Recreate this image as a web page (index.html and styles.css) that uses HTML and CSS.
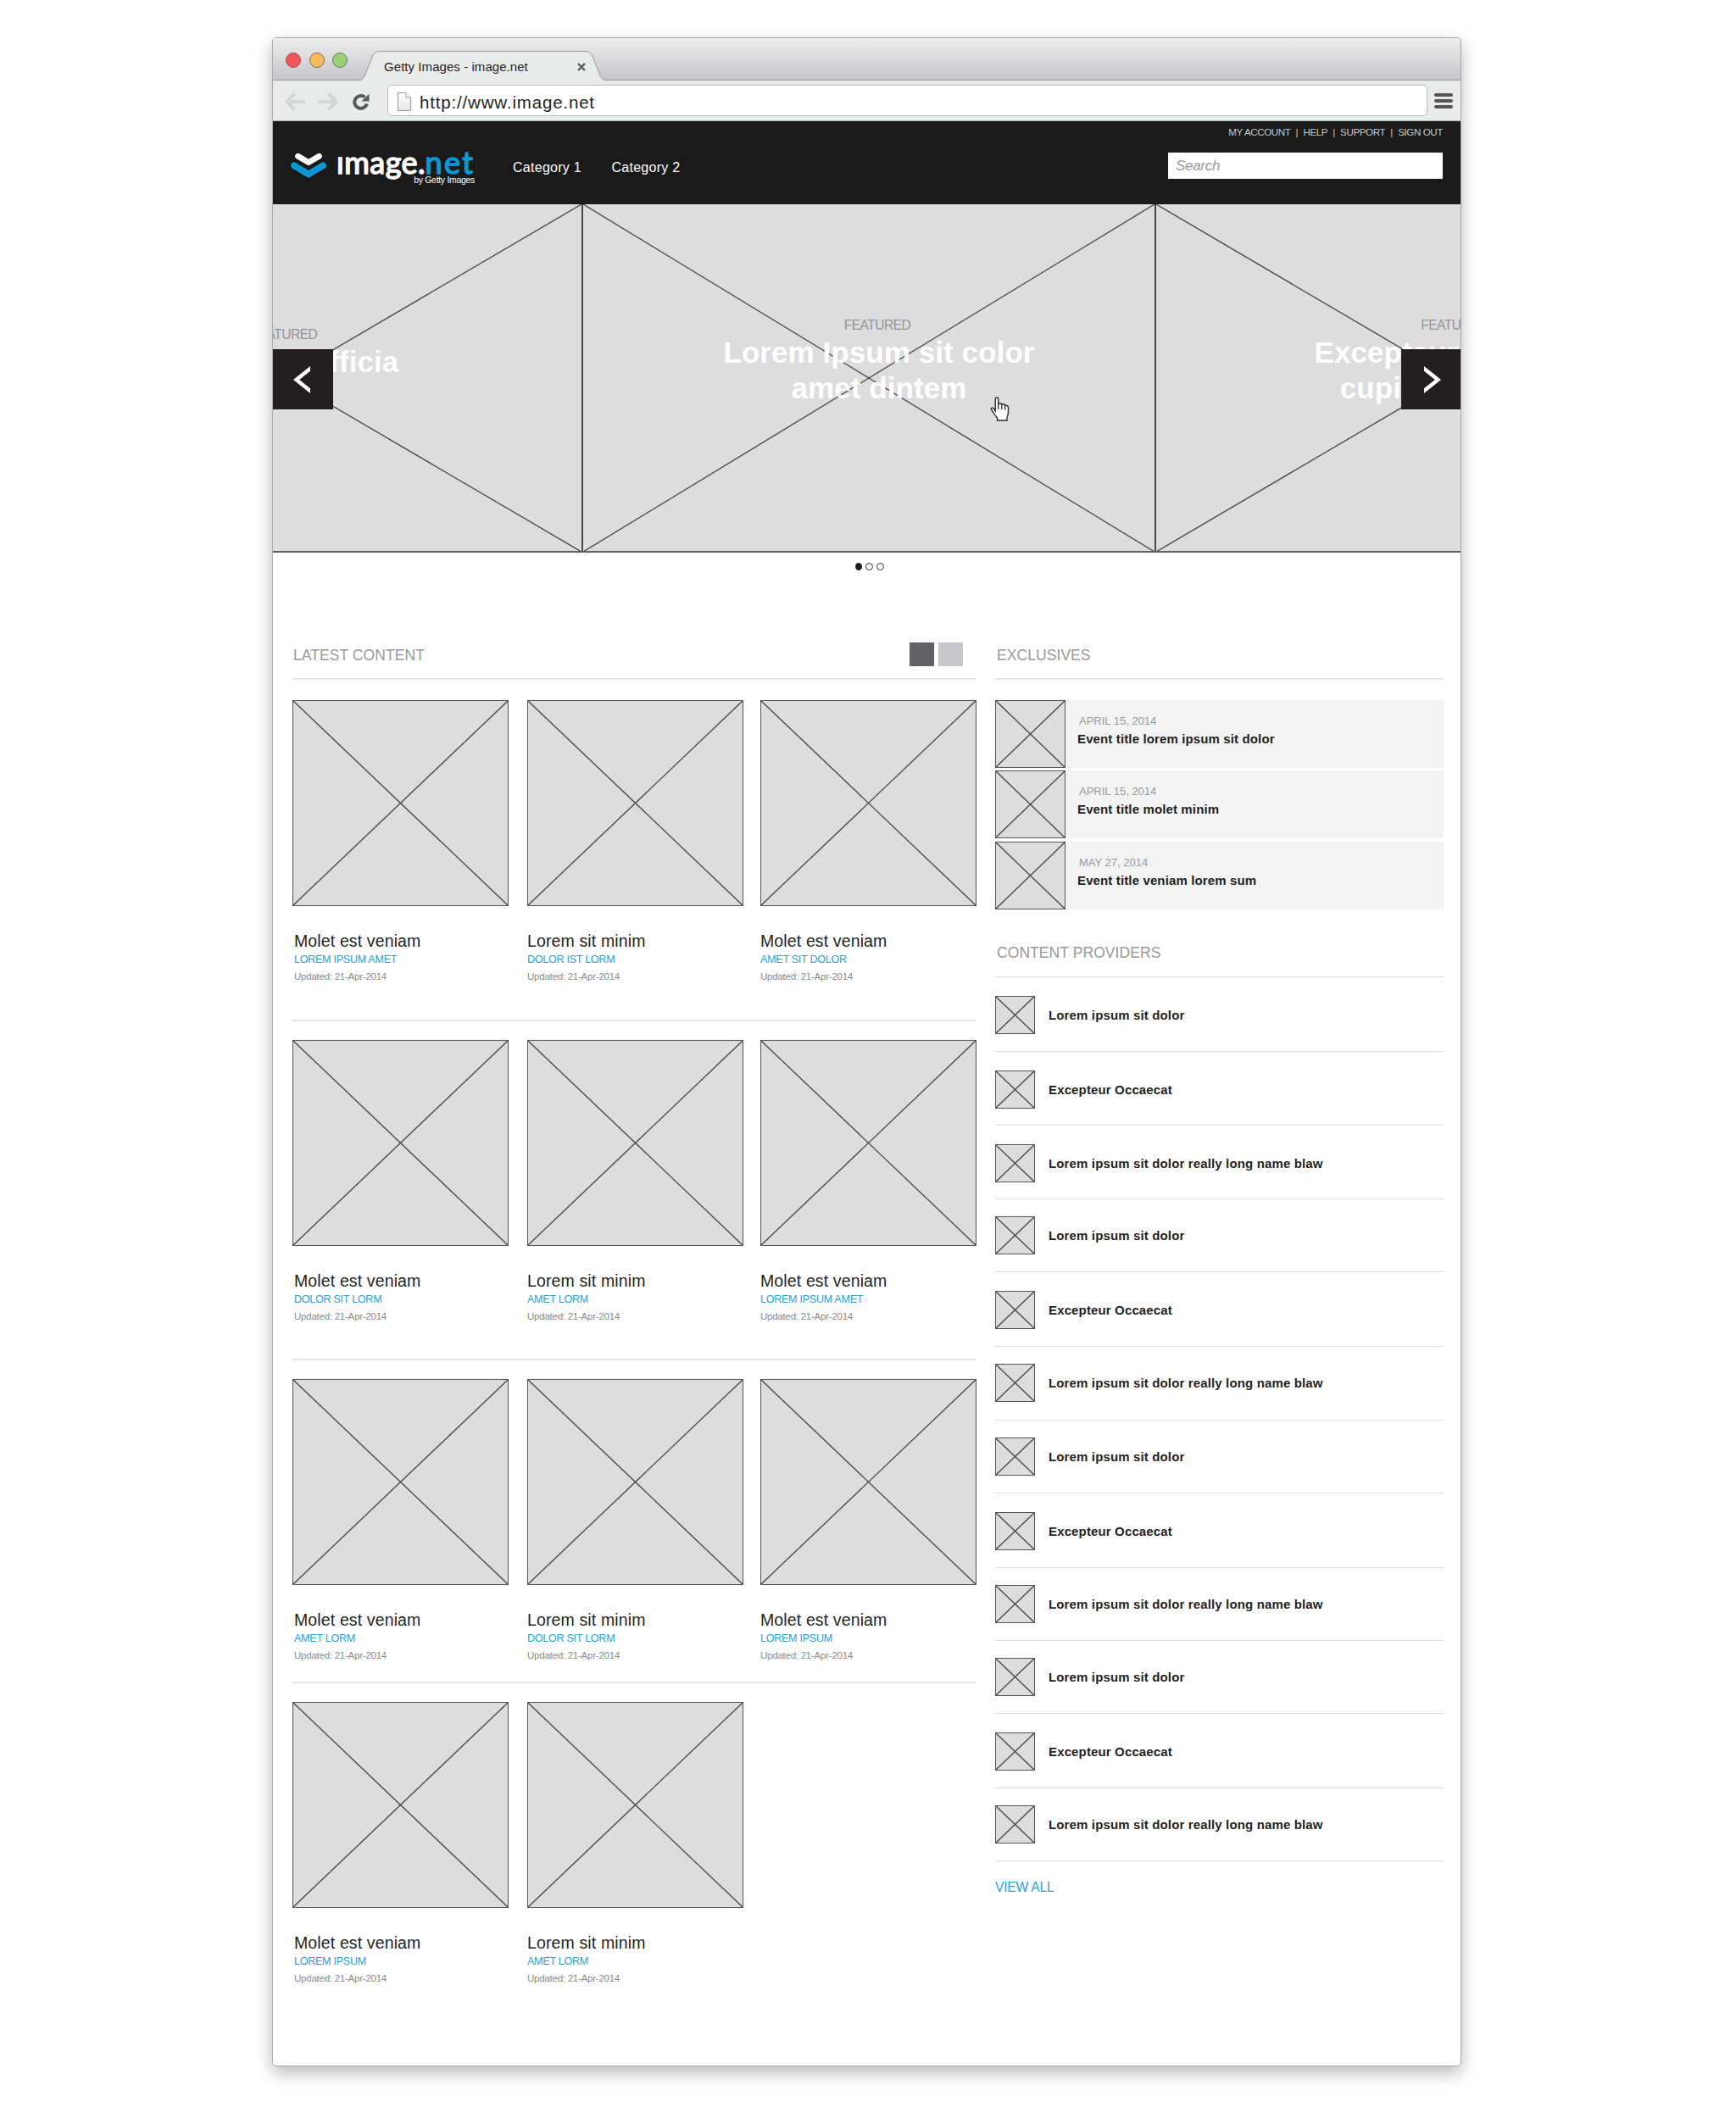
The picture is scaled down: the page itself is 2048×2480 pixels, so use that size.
FILE: index.html
```html
<!DOCTYPE html>
<html lang="en">
<head>
<meta charset="utf-8">
<title>Getty Images - image.net</title>
<link rel="stylesheet" href="styles.css">
</head>
<body>
<div class="window">
  <div class="tabstrip">
    <div class="lights"><i class="red"></i><i class="amber"></i><i class="green"></i></div>
    <div class="tab">
      <svg class="tab-shape" width="290" height="35" viewBox="0 0 290 35"><path d="M0 34.500C4 34.500 5.500 31 7 28L15.500 6Q18 .6 24 .6H266Q272.500 .6 275 6L283.500 28Q286 34.500 290 34.500V36H0Z" fill="#e9ebeb" stroke="#97979b"/></svg>
      <span class="tab-title">Getty Images - image.net</span>
      <svg class="tab-close" width="10" height="10" viewBox="0 0 10 10"><path d="M1 1L9 9M9 1L1 9" stroke="#58595b" stroke-width="2.400"/></svg>
    </div>
  </div>
  <div class="toolbar">
    <svg class="nav-arrow" width="25" height="22" viewBox="0 0 25 22"><path d="M11.500 1.500L2.500 11L11.500 20.500M2.500 11H24" fill="none" stroke="#d3d5d6" stroke-width="4"/></svg>
    <svg class="nav-arrow" width="25" height="22" viewBox="0 0 25 22"><path d="M13.500 1.500L22.500 11L13.500 20.500M22.500 11H1" fill="none" stroke="#d3d5d6" stroke-width="4"/></svg>
    <svg class="reload" width="20" height="20" viewBox="0 0 20 20"><path d="M16.800 12.500A7.400 7.400 0 1 1 14.500 4.800" fill="none" stroke="#58595b" stroke-width="4"/><path d="M19.500 .8V9.500H10.500Z" fill="#58595b"/></svg>
    <div class="address">
      <svg width="16" height="22" viewBox="0 0 16 22"><defs><linearGradient id="sheet" x2="0" y2="1"><stop stop-color="#fff"/><stop offset="1" stop-color="#e6e6e6"/></linearGradient></defs><path d="M.5 .5H10L15.500 6V21.500H.5Z" fill="url(#sheet)" stroke="#999"/><path d="M10 .5V6H15.500" fill="#fff" stroke="#999"/></svg>
      <span class="url">http://www.image.net</span>
    </div>
    <div class="menu"><i></i><i></i><i></i></div>
  </div>

  <header class="site-header">
    <a class="logo">
      <svg width="42" height="32" viewBox="0 0 42 32"><path d="M4 15.300L21 25.500L38 15.300" fill="none" stroke="#0d96d4" stroke-width="7.800" stroke-linecap="round"/><path d="M8.500 5L21 13L33.500 5" fill="none" stroke="#1a1a1a" stroke-width="9" stroke-linecap="round"/><path d="M8.500 4.300L21 11.600L33.500 4.300" fill="none" stroke="#fff" stroke-width="6.800" stroke-linecap="round"/></svg>
      <span class="wordmark"><span class="brand"><span class="brand-name">image</span><span class="brand-dot">.</span><span class="brand-net">net</span></span><span class="byline">by Getty Images</span></span>
    </a>
    <nav class="categories"><a>Category 1</a><a>Category 2</a></nav>
    <div class="account">
      <div class="links"><a>MY ACCOUNT</a><b>|</b><a>HELP</a><b>|</b><a>SUPPORT</a><b>|</b><a>SIGN OUT</a></div>
      <div class="search">Search</div>
    </div>
  </header>

  <section class="hero">
    <div class="track">
      <article class="slide prev">
        <svg class="cross"><line x1="0" y1="0" x2="100%" y2="100%"/><line x1="100%" y1="0" x2="0" y2="100%"/></svg>
        <div class="caption"><p>FEATURED</p><h2>deserunt officia</h2></div>
      </article>
      <article class="slide current">
        <svg class="cross"><line x1="0" y1="0" x2="100%" y2="100%"/><line x1="100%" y1="0" x2="0" y2="100%"/></svg>
        <div class="caption"><p>FEATURED</p><h2>Lorem Ipsum sit color<br>amet dintem</h2></div>
      </article>
      <article class="slide next">
        <svg class="cross"><line x1="0" y1="0" x2="100%" y2="100%"/><line x1="100%" y1="0" x2="0" y2="100%"/></svg>
        <div class="caption"><p>FEATURED</p><h2>Excepteur occaecat<br>cupidatat minim</h2></div>
      </article>
    </div>
    <button class="arrow left"><svg width="20" height="32" viewBox="0 0 20 32"><path d="M22 1.300L3.600 16L22 30.700" fill="none" stroke="#fff" stroke-width="4.500"/></svg></button>
    <button class="arrow right"><svg width="20" height="32" viewBox="0 0 20 32"><path d="M-2 1.300L16.400 16L-2 30.700" fill="none" stroke="#fff" stroke-width="4.500"/></svg></button>
    <svg class="pointer" width="24" height="30" viewBox="0 0 24 30"><path d="M6.300 17V3Q6.300 1 8 1Q9.700 1 9.700 3V9Q10.500 7.400 12.200 7.900Q13.600 8.300 13.700 9.500Q15 8.300 16.500 9Q17.600 9.500 17.700 10.800Q19 9.800 20.300 10.600Q21.600 11.500 21.500 13.500V19Q21.300 22 20 24.500V28H8.500V25Q5 21 3 17.500Q.5 14.500 1.500 13.500Q3 12.500 4.500 14.200Z" fill="#fff" stroke="#2b2b2b" stroke-width="1.400"/><path d="M9.700 8V15M13.700 9.500V15M17.700 10.800V15.500" stroke="#2b2b2b" stroke-width="1.300"/></svg>
  </section>
  <div class="pager"><i class="on"></i><i></i><i></i></div>

  <main class="content">
    <section class="latest">
      <div class="head"><h3>LATEST CONTENT</h3><div class="toggles"><i class="dark"></i><i></i></div></div>
      <div class="row">
        <article class="card"><svg class="cross"><line x1="0" y1="0" x2="100%" y2="100%"/><line x1="100%" y1="0" x2="0" y2="100%"/></svg><h4>Molet est veniam</h4><p class="tag">LOREM IPSUM AMET</p><p class="date">Updated: 21-Apr-2014</p></article>
        <article class="card"><svg class="cross"><line x1="0" y1="0" x2="100%" y2="100%"/><line x1="100%" y1="0" x2="0" y2="100%"/></svg><h4>Lorem sit minim</h4><p class="tag">DOLOR IST LORM</p><p class="date">Updated: 21-Apr-2014</p></article>
        <article class="card"><svg class="cross"><line x1="0" y1="0" x2="100%" y2="100%"/><line x1="100%" y1="0" x2="0" y2="100%"/></svg><h4>Molet est veniam</h4><p class="tag">AMET SIT DOLOR</p><p class="date">Updated: 21-Apr-2014</p></article>
      </div>
      <div class="row">
        <article class="card"><svg class="cross"><line x1="0" y1="0" x2="100%" y2="100%"/><line x1="100%" y1="0" x2="0" y2="100%"/></svg><h4>Molet est veniam</h4><p class="tag">DOLOR SIT LORM</p><p class="date">Updated: 21-Apr-2014</p></article>
        <article class="card"><svg class="cross"><line x1="0" y1="0" x2="100%" y2="100%"/><line x1="100%" y1="0" x2="0" y2="100%"/></svg><h4>Lorem sit minim</h4><p class="tag">AMET LORM</p><p class="date">Updated: 21-Apr-2014</p></article>
        <article class="card"><svg class="cross"><line x1="0" y1="0" x2="100%" y2="100%"/><line x1="100%" y1="0" x2="0" y2="100%"/></svg><h4>Molet est veniam</h4><p class="tag">LOREM IPSUM AMET</p><p class="date">Updated: 21-Apr-2014</p></article>
      </div>
      <div class="row short">
        <article class="card"><svg class="cross"><line x1="0" y1="0" x2="100%" y2="100%"/><line x1="100%" y1="0" x2="0" y2="100%"/></svg><h4>Molet est veniam</h4><p class="tag">AMET LORM</p><p class="date">Updated: 21-Apr-2014</p></article>
        <article class="card"><svg class="cross"><line x1="0" y1="0" x2="100%" y2="100%"/><line x1="100%" y1="0" x2="0" y2="100%"/></svg><h4>Lorem sit minim</h4><p class="tag">DOLOR SIT LORM</p><p class="date">Updated: 21-Apr-2014</p></article>
        <article class="card"><svg class="cross"><line x1="0" y1="0" x2="100%" y2="100%"/><line x1="100%" y1="0" x2="0" y2="100%"/></svg><h4>Molet est veniam</h4><p class="tag">LOREM IPSUM</p><p class="date">Updated: 21-Apr-2014</p></article>
      </div>
      <div class="row last">
        <article class="card"><svg class="cross"><line x1="0" y1="0" x2="100%" y2="100%"/><line x1="100%" y1="0" x2="0" y2="100%"/></svg><h4>Molet est veniam</h4><p class="tag">LOREM IPSUM</p><p class="date">Updated: 21-Apr-2014</p></article>
        <article class="card"><svg class="cross"><line x1="0" y1="0" x2="100%" y2="100%"/><line x1="100%" y1="0" x2="0" y2="100%"/></svg><h4>Lorem sit minim</h4><p class="tag">AMET LORM</p><p class="date">Updated: 21-Apr-2014</p></article>
      </div>
    </section>

    <aside class="side">
      <div class="head"><h3>EXCLUSIVES</h3></div>
      <ul class="events">
        <li><svg class="cross"><line x1="0" y1="0" x2="100%" y2="100%"/><line x1="100%" y1="0" x2="0" y2="100%"/></svg><div><p>APRIL 15, 2014</p><h4>Event title lorem ipsum sit dolor</h4></div></li>
        <li><svg class="cross"><line x1="0" y1="0" x2="100%" y2="100%"/><line x1="100%" y1="0" x2="0" y2="100%"/></svg><div><p>APRIL 15, 2014</p><h4>Event title molet minim</h4></div></li>
        <li><svg class="cross"><line x1="0" y1="0" x2="100%" y2="100%"/><line x1="100%" y1="0" x2="0" y2="100%"/></svg><div><p>MAY 27, 2014</p><h4>Event title veniam lorem sum</h4></div></li>
      </ul>
      <div class="head providers-head"><h3>CONTENT PROVIDERS</h3></div>
      <ul class="providers">
        <li><svg class="cross"><line x1="0" y1="0" x2="100%" y2="100%"/><line x1="100%" y1="0" x2="0" y2="100%"/></svg><span>Lorem ipsum sit dolor</span></li>
        <li><svg class="cross"><line x1="0" y1="0" x2="100%" y2="100%"/><line x1="100%" y1="0" x2="0" y2="100%"/></svg><span>Excepteur Occaecat</span></li>
        <li><svg class="cross"><line x1="0" y1="0" x2="100%" y2="100%"/><line x1="100%" y1="0" x2="0" y2="100%"/></svg><span>Lorem ipsum sit dolor really long name blaw</span></li>
        <li><svg class="cross"><line x1="0" y1="0" x2="100%" y2="100%"/><line x1="100%" y1="0" x2="0" y2="100%"/></svg><span>Lorem ipsum sit dolor</span></li>
        <li><svg class="cross"><line x1="0" y1="0" x2="100%" y2="100%"/><line x1="100%" y1="0" x2="0" y2="100%"/></svg><span>Excepteur Occaecat</span></li>
        <li><svg class="cross"><line x1="0" y1="0" x2="100%" y2="100%"/><line x1="100%" y1="0" x2="0" y2="100%"/></svg><span>Lorem ipsum sit dolor really long name blaw</span></li>
        <li><svg class="cross"><line x1="0" y1="0" x2="100%" y2="100%"/><line x1="100%" y1="0" x2="0" y2="100%"/></svg><span>Lorem ipsum sit dolor</span></li>
        <li><svg class="cross"><line x1="0" y1="0" x2="100%" y2="100%"/><line x1="100%" y1="0" x2="0" y2="100%"/></svg><span>Excepteur Occaecat</span></li>
        <li><svg class="cross"><line x1="0" y1="0" x2="100%" y2="100%"/><line x1="100%" y1="0" x2="0" y2="100%"/></svg><span>Lorem ipsum sit dolor really long name blaw</span></li>
        <li><svg class="cross"><line x1="0" y1="0" x2="100%" y2="100%"/><line x1="100%" y1="0" x2="0" y2="100%"/></svg><span>Lorem ipsum sit dolor</span></li>
        <li><svg class="cross"><line x1="0" y1="0" x2="100%" y2="100%"/><line x1="100%" y1="0" x2="0" y2="100%"/></svg><span>Excepteur Occaecat</span></li>
        <li><svg class="cross"><line x1="0" y1="0" x2="100%" y2="100%"/><line x1="100%" y1="0" x2="0" y2="100%"/></svg><span>Lorem ipsum sit dolor really long name blaw</span></li>
      </ul>
      <a class="view-all">VIEW ALL</a>
    </aside>
  </main>
</div>
</body>
</html>
```
FILE: styles.css
```css
* { box-sizing: border-box; }
html { background: #fff; }
body { display: flow-root; min-height: 2480px; margin: 0; background: #fff; font-family: "Liberation Sans", Arial, sans-serif; color: #1f1f1f; }
h2, h3, h4, p, ul { margin: 0; padding: 0; font-weight: normal; }
ul { list-style: none; }
svg { display: block; }

.window { width: 1403px; height: 2394px; margin: 44px 0 0 321px; border: 1px solid #a9a9ac; border-radius: 5px; background: #fff; box-shadow: 0 8px 20px rgba(0, 0, 0, .28); overflow: hidden; }

/* Browser chrome */
.tabstrip { display: flex; height: 50px; border-bottom: 1px solid #97979b; background: linear-gradient(#ededee, #c6c6ca); }
.lights { display: flex; gap: 9.500px; width: 102px; padding: 17px 0 0 15px; }
.lights i { width: 18px; height: 18px; border: 1px solid #7d6a5a; border-radius: 50%; }
.lights .red { background: #f1565a; border-color: #a24a4d; }
.lights .amber { background: #f9bb5b; }
.lights .green { background: #99d077; border-color: #62804f; }
.tab { display: grid; grid-template-columns: 290px; height: 35px; margin-top: 15px; }
.tab > * { grid-area: 1 / 1; }
.tab-title { justify-self: start; margin: 8px 0 0 29px; font-size: 15px; letter-spacing: .06px; line-height: 22px; white-space: nowrap; }
.tab-close { margin: 14px 0 0 257px; }
.toolbar { display: flex; height: 48px; padding: 5px 9px 0 14px; border-bottom: 1px solid #b5b8b8; background: #e9ebeb; }
.nav-arrow { margin: 9px 13px 0 0; }
.reload { margin: 10px 21px 0 4px; }
.address { display: flex; flex: 1; height: 37px; padding: 8px 11px; gap: 10px; border: 1px solid #bbbebe; border-radius: 5px; background: #fff; }
.url { font-size: 20.500px; letter-spacing: .83px; line-height: 24px; white-space: nowrap; }
.menu { display: grid; align-content: start; gap: 3px; width: 22px; margin: 10px 0 0 8px; }
.menu i { height: 4px; border-radius: 2px; background: #555; }

/* Site header */
.site-header { display: flex; height: 98px; background: #1a1a1a; color: #fff; }
.logo { display: flex; padding: 37px 0 0 21px; }
.wordmark { display: grid; align-content: start; width: 163px; margin-left: 12px; }
.brand { display: flex; height: 33px; margin-top: -8px; font-family: Lato, sans-serif; font-size: 36px; line-height: 38px; white-space: nowrap; -webkit-text-stroke: 1.500px; }
.brand-name { letter-spacing: .5px; clip-path: inset(12px -2px -8px -2px); }
.brand-net { color: #0d96d4; letter-spacing: 2.200px; }
.byline { justify-self: end; font-size: 10.500px; letter-spacing: -.3px; line-height: 14px; white-space: nowrap; }
.categories { display: flex; gap: 35.500px; padding: 45px 0 0 45px; font-size: 16px; letter-spacing: .27px; line-height: 20px; white-space: nowrap; }
.account { display: grid; align-content: start; justify-items: end; margin-left: auto; padding: 4px 21px 0 0; }
.links { display: flex; gap: 6.200px; color: #c9c9c9; font-size: 11.600px; letter-spacing: -.4px; line-height: 18px; }
.links b { font-weight: normal; }
.search { width: 324px; height: 31px; margin-top: 15px; padding-left: 9px; background: #fff; color: #999; font-size: 17px; font-style: italic; letter-spacing: -.3px; line-height: 31px; }

/* Placeholder picture */
.cross { display: block; border: 1.500px solid #555; background: #ddd; stroke: #4c4c4c; stroke-width: 1.400px; }

/* Carousel */
.hero { position: relative; height: 411px; overflow: hidden; border-bottom: 2px solid #606060; background: #ddd; }
.track { display: flex; margin-left: -338px; }
.slide { display: grid; flex: none; height: 410px; }
.slide > * { grid-area: 1 / 1; }
.slide .cross { width: 100%; height: 410px; border: 0; border-left: 2px solid #4a4a4a; }
.slide.prev { width: 702px; }
.slide.current { width: 676px; }
.slide.next { width: 700px; }
.caption { padding-top: 133px; text-align: center; white-space: nowrap; }
.caption p { color: #949498; font-size: 15.600px; letter-spacing: -.55px; line-height: 20px; }
.caption h2 { margin-top: 1px; color: #fff; font-size: 35px; font-weight: bold; letter-spacing: .07px; line-height: 41.600px; }
.prev .caption { padding-top: 144px; }
.prev .caption h2 { margin-top: 1px; padding-left: 9px; }
.current .caption { padding-left: 22px; }
.current .caption h2 { padding-left: 4px; }
.next .caption { padding-left: 7px; }
.arrow { position: absolute; top: 171px; width: 71px; height: 71px; padding: 0; border: 0; background: #231f20; display: grid; place-items: center; }
.arrow.left { left: 0; padding-right: 3px; }
.arrow.right { right: 0; width: 70px; padding-left: 4px; }
.pointer { position: absolute; left: 846px; top: 227px; }
.pager { display: flex; gap: 4px; height: 48px; padding: 12px 0 0 687px; }
.pager i { width: 9px; height: 9px; border: 1.500px solid #333; border-radius: 50%; }
.pager .on { width: 8px; background: #1a1a1a; }

/* Columns */
.content { display: grid; grid-template-columns: 807px 529px; gap: 22px; padding-left: 23px; }
.head { display: flex; align-items: flex-end; justify-content: space-between; height: 102px; padding: 0 16px 14px 1px; border-bottom: 2px solid #e6e6e6; }
.head h3 { color: #999; font-size: 17.500px; letter-spacing: .07px; line-height: 26px; }
.side .head { padding-left: 2px; }
.toggles { display: flex; gap: 5px; }
.toggles i { width: 29px; height: 28px; background: #c7c7cb; }
.toggles .dark { background: #626266; }

.row { display: grid; grid-template-columns: 255px 255px 255px; column-gap: 22px; height: 400px; padding-top: 22px; border-bottom: 2px solid #e6e6e6; }
.head + .row { height: 403px; padding-top: 24px; }
.row.short { height: 381px; }
.row.last { border: 0; }
.card:nth-child(3) { margin-left: -2px; margin-right: 2px; }
.card .cross { width: 255px; height: 243px; }
.card h4 { margin-top: 30px; font-size: 19.500px; letter-spacing: .13px; line-height: 22px; }
.tag { color: #27a3dc; font-size: 12.600px; letter-spacing: -.3px; line-height: 22px; }
.date { color: #8a8a8a; font-size: 11.500px; letter-spacing: -.24px; line-height: 18px; }
.card:first-child h4, .card:first-child p { margin-left: 2px; }

.events { display: grid; gap: 3px; margin-top: 24px; }
.events li { display: flex; background: #f3f3f3; }
.events li:last-child { margin-top: 1px; }
.events .cross { width: 83px; height: 80px; }
.events div { padding: 16px 0 0 14px; }
.events p { padding-left: 2px; color: #999; font-size: 13px; line-height: 18px; }
.events h4 { font-size: 15px; font-weight: bold; letter-spacing: .13px; line-height: 23px; }
.side .providers-head { height: 80px; border-bottom-width: 1px; border-color: #dcdcdc; padding-bottom: 15px; }
.providers { display: grid; grid-template-rows: 88px 87px 87px 86px 88px 87px 86px 88px 86px 86px 88px 86px; }
.providers li { display: flex; gap: 16px; padding-top: 20px; border-bottom: 1px solid #dcdcdc; font-size: 15px; font-weight: bold; letter-spacing: .14px; line-height: 46px; }
.providers li:nth-child(1), .providers li:nth-child(3), .providers li:nth-child(3n+2) { padding-top: 22px; }
.providers .cross { width: 47px; height: 45px; }
.view-all { display: block; margin-top: 21px; color: #27a3dc; font-size: 15.600px; letter-spacing: -.2px; line-height: 20px; }
```
